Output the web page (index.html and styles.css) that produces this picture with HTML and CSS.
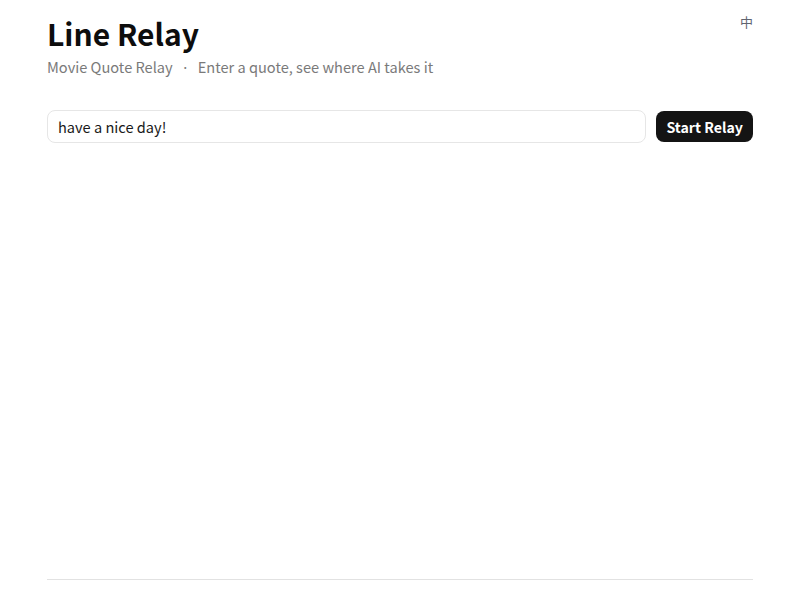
FILE: index.html
```html
<!DOCTYPE html>
<html lang="en">
<head>
<meta charset="utf-8">
<title>Line Relay</title>
<link rel="stylesheet" href="styles.css">
</head>
<body>
<div class="page">
  <header class="header">
    <div class="brand">
      <h1 class="title">Line Relay</h1>
      <p class="subtitle">Movie Quote Relay<span class="dot">•</span>Enter a quote, see where AI takes it</p>
    </div>
    <button class="lang" type="button">中</button>
  </header>
  <form class="relay-form" onsubmit="return false">
    <input class="quote-input" type="text" value="have a nice day!">
    <button class="start-btn" type="submit">Start Relay</button>
  </form>
  <main class="stage"></main>
  <footer class="footer"></footer>
</div>
</body>
</html>
```

FILE: styles.css
```css
* { box-sizing: border-box; }

html, body {
  margin: 0;
  padding: 0;
  background: #fff;
}

body {
  font-family: "Noto Sans CJK SC", "Noto Sans", sans-serif;
  color: #111;
}

.page {
  height: 599px;
  padding: 0 47px;
  display: flex;
  flex-direction: column;
}

.header {
  display: flex;
  justify-content: space-between;
  align-items: flex-start;
  padding-top: 12px;
}

.title {
  margin: 0;
  font-size: 30px;
  font-weight: 700;
  line-height: 43px;
  letter-spacing: 0;
  color: #0d0d0d;
}

.subtitle {
  margin: 2px 0 0;
  font-size: 14.6px;
  line-height: 20px;
  color: #7a7a7a;
}

.dot {
  display: inline-block;
  margin: 0 8px;
  font-size: 9px;
  vertical-align: 2px;
}

.lang {
  border: 0;
  background: none;
  padding: 0;
  margin-top: 0;
  font-family: "Noto Sans CJK SC", sans-serif;
  font-size: 13px;
  color: #5f6470;
}

.relay-form {
  display: flex;
  gap: 10px;
  margin-top: 32px;
}

.quote-input {
  flex: 1;
  height: 33px;
  border: 1px solid #e6e6e6;
  border-radius: 8px;
  padding: 0 10px;
  font-family: inherit;
  font-size: 14.6px;
  color: #1a1a1a;
  outline: none;
}

.start-btn {
  height: 31px;
  margin-top: 1px;
  padding: 0 10px;
  border: 0;
  border-radius: 8px;
  background: #141414;
  color: #fff;
  font-family: inherit;
  font-size: 14.2px;
  font-weight: 600;
}

.stage {
  flex: 1;
}

.footer {
  border-top: 1px solid #e2e2e2;
  height: 20px;
}
```
